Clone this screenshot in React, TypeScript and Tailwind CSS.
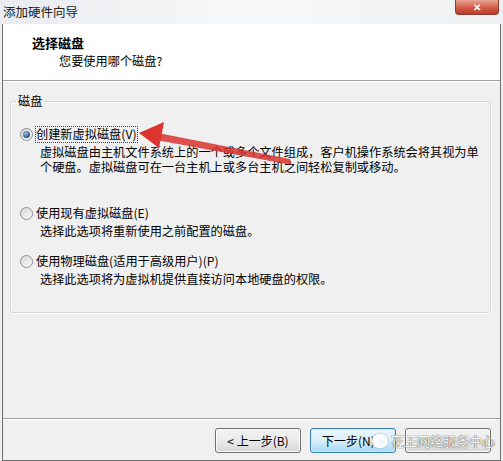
import React from 'react';

const font = 'font-["SimSun","Noto_Sans_CJK_SC",sans-serif]';

const Radio: React.FC<{ checked?: boolean }> = ({ checked }) => (
  <span className="relative inline-flex h-[13px] w-[13px] shrink-0 items-center justify-center rounded-full border border-[#8e8f8f] bg-gradient-to-br from-[#d8d8d8] to-[#f8f8f8]">
    {checked && (
      <span className="h-[7px] w-[7px] rounded-full bg-[radial-gradient(circle_at_40%_35%,#9fc3e6,#1f4f86_70%)]" />
    )}
  </span>
);

const Option: React.FC<{ label: string; lines: string[]; checked?: boolean; focus?: boolean }> = ({ label, lines, checked, focus }) => (
  <div className="flex flex-col">
    <div className="flex items-center gap-[3px] pl-[9px]">
      <Radio checked={checked} />
      <span className={`leading-[15px] ${focus ? 'outline-1 outline-dotted outline-[#444]' : ''}`}>{label}</span>
    </div>
    <div className="mt-[3px] pl-[29px] leading-[15px]">
      {lines.map((l) => (
        <div key={l}>{l}</div>
      ))}
    </div>
  </div>
);

const Button: React.FC<{ label?: string; primary?: boolean }> = ({ label, primary }) => (
  <div
    className={`flex h-[25px] w-[86px] items-center justify-center rounded-[3px] border text-[12px] ${
      primary
        ? 'border-[#3c7fb1] bg-gradient-to-b from-[#eaf6fd] via-[#d9f0fc] to-[#a7d9f5] shadow-[inset_0_0_0_1px_#cdeafa]'
        : 'border-[#707070] bg-gradient-to-b from-[#f2f2f2] via-[#ebebeb] to-[#d7d7d7] shadow-[inset_0_0_0_1px_#fcfcfc]'
    }`}
  >
    {label}
  </div>
);

export default function App() {
  return (
    <div className={`relative flex h-[461px] w-[503px] flex-col overflow-hidden bg-[#f0f0f0] text-[12.2px] text-black ${font}`}>
      {/* title bar */}
      <div className="relative flex h-[24px] shrink-0 items-center bg-gradient-to-r from-[#e9ecef] via-[#f7f8f9] to-[#eef0f2] pl-[3px]">
        <span className="text-[12.5px] text-[#222]">添加硬件向导</span>
        <div className="absolute right-[4px] top-0 flex h-[15px] w-[44px] items-center justify-center rounded-b-[4px] border border-t-0 border-[#8a3a32] bg-gradient-to-b from-[#e8a493] via-[#d2604a] to-[#c0392b]">
          <span className="text-[10px] font-bold leading-none text-white">✕</span>
        </div>
      </div>

      {/* window frame */}
      <div className="ml-[2px] flex w-[499px] flex-1 flex-col border-x border-b border-[#6e6e6e]">
        {/* header */}
        <div className="flex h-[57px] shrink-0 flex-col border-b border-[#a0a0a0] bg-white pl-[29px] pt-[10px]">
          <div className="text-[13px] font-bold leading-[17px]">选择磁盘</div>
          <div className="mt-[2px] pl-[27px] leading-[16px]">您要使用哪个磁盘?</div>
        </div>

        {/* body */}
        <div className="flex flex-1 flex-col border-t border-white px-[7px] pt-[19px]">
          <div className="relative h-[212px] w-[481px] rounded-[3px] border border-[#d5d5d5] shadow-[inset_1px_1px_0_#fff,1px_1px_0_#fff]">
            <span className="absolute -top-[8px] left-[5px] bg-[#f0f0f0] px-[2px] leading-[15px]">磁盘</span>
            <div className="flex flex-col pt-[25px]">
              <Option
                checked
                focus
                label="创建新虚拟磁盘(V)"
                lines={['虚拟磁盘由主机文件系统上的一个或多个文件组成，客户机操作系统会将其视为单', '个硬盘。虚拟磁盘可在一台主机上或多台主机之间轻松复制或移动。']}
              />
              <div className="h-[31px]" />
              <Option label="使用现有虚拟磁盘(E)" lines={['选择此选项将重新使用之前配置的磁盘。']} />
              <div className="h-[15px]" />
              <Option label="使用物理磁盘(适用于高级用户)(P)" lines={['选择此选项将为虚拟机提供直接访问本地硬盘的权限。']} />
            </div>
          </div>
        </div>

        {/* footer */}
        <div className="flex h-[42px] shrink-0 items-start justify-end gap-[9px] border-t border-[#a0a0a0] pr-[9px] pt-[9px] shadow-[inset_0_1px_0_#fff]">
          <Button label="< 上一步(B)" />
          <Button primary label="下一步(N) >" />
          <Button />
        </div>
      </div>

      {/* watermark */}
      <div className="pointer-events-none absolute left-[372px] top-[431px] flex items-center gap-[3px]">
        <span className="h-[14px] w-[16px] rounded-full bg-white/90 shadow-[0_0_2px_#999]" />
        <span className="text-[13px] text-[#f6f6f6] [text-shadow:0_0_1px_#555,0_0_1px_#555]">花王网络服务中心</span>
      </div>

      {/* red arrow */}
      <svg className="pointer-events-none absolute left-0 top-0" width="503" height="461">
        <polygon points="292,165 290,159 158,133 156,140" fill="#d9342f" fillOpacity="0.85" />
        <polygon points="139,133 164,122 159,148" fill="#dc3530" />
      </svg>
    </div>
  );
}
